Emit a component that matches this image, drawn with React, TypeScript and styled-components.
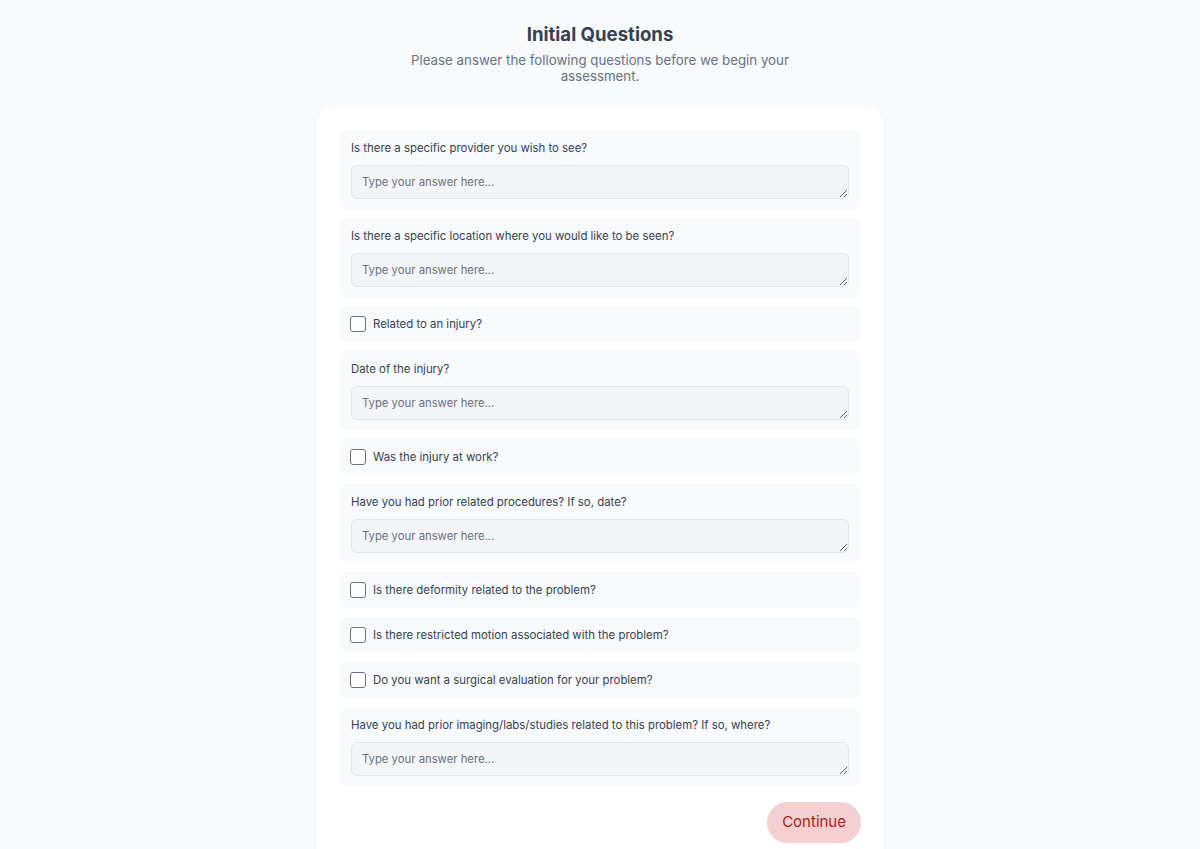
import { createGlobalStyle, styled } from "styled-components";

const GlobalStyle = createGlobalStyle`
  html, body {
    margin: 0;
    padding: 0;
    background-color: #f8fafc;
    font-family: Inter, "Noto Sans", sans-serif;
    color: #374151;
  }
  * {
    box-sizing: border-box;
  }
`;

const Page = styled.div`
  display: flex;
  flex-direction: column;
  align-items: center;
  padding: 20px 16px 40px;
`;

const Title = styled.h1`
  margin: 0;
  font-size: 18.6px;
  line-height: 28px;
  font-weight: 700;
  color: #374151;
`;

const Subtitle = styled.p`
  margin: 4px 0 0;
  max-width: 390px;
  text-align: center;
  font-size: 13.3px;
  line-height: 16px;
  color: #6b7280;
`;

const Card = styled.div`
  margin-top: 23px;
  width: 568px;
  background-color: #ffffff;
  border-radius: 16px;
  padding: 23px;
  box-shadow: 0 1px 3px rgba(15, 23, 42, 0.06), 0 1px 2px rgba(15, 23, 42, 0.04);
  display: flex;
  flex-direction: column;
  gap: 9px;
`;

const Question = styled.div`
  background-color: #f8fafc;
  border-radius: 8px;
  padding: 10px 12px;
  display: flex;
  flex-direction: column;
  gap: 9px;
`;

const Label = styled.label`
  font-size: 11.4px;
  line-height: 16px;
  color: #374151;
`;

const Answer = styled.textarea`
  display: block;
  width: 100%;
  height: 34px;
  min-height: 34px;
  padding: 7px 10px;
  border: 1px solid #e2e8f0;
  border-radius: 6px;
  background-color: #f3f5f8;
  font-family: Inter, "Noto Sans", sans-serif;
  font-size: 11.3px;
  line-height: 18px;
  color: #374151;
  resize: vertical;
  &::placeholder {
    color: #6b7280;
  }
  &:focus {
    outline: none;
    border-color: #cbd5e1;
  }
`;

const CheckRow = styled.label`
  background-color: #f8fafc;
  border-radius: 8px;
  padding: 10px 11px;
  display: flex;
  align-items: center;
  gap: 7px;
  font-size: 11.4px;
  line-height: 16px;
  color: #374151;
  cursor: pointer;
`;

const Box = styled.input`
  appearance: none;
  margin: 0;
  width: 16px;
  height: 16px;
  flex-shrink: 0;
  border: 1.5px solid #6b7280;
  border-radius: 3px;
  background-color: #ffffff;
  cursor: pointer;
  &:checked {
    background-color: #b91c1c;
    border-color: #b91c1c;
  }
`;

const Footer = styled.div`
  display: flex;
  justify-content: flex-end;
  margin-top: 7px;
`;

const ContinueButton = styled.button`
  border: 0;
  border-radius: 999px;
  background-color: #f5d0d0;
  color: #a91d1d;
  font-family: Inter, "Noto Sans", sans-serif;
  font-size: 15px;
  line-height: 20px;
  padding: 10px 15px 11px;
  cursor: pointer;
`;

type Item = { kind: "text" | "check"; text: string };

const questions: Item[] = [
  { kind: "text", text: "Is there a specific provider you wish to see?" },
  { kind: "text", text: "Is there a specific location where you would like to be seen?" },
  { kind: "check", text: "Related to an injury?" },
  { kind: "text", text: "Date of the injury?" },
  { kind: "check", text: "Was the injury at work?" },
  { kind: "text", text: "Have you had prior related procedures? If so, date?" },
  { kind: "check", text: "Is there deformity related to the problem?" },
  { kind: "check", text: "Is there restricted motion associated with the problem?" },
  { kind: "check", text: "Do you want a surgical evaluation for your problem?" },
  {
    kind: "text",
    text: "Have you had prior imaging/labs/studies related to this problem? If so, where?",
  },
];

export default function App() {
  return (
    <>
      <GlobalStyle />
      <Page>
        <Title>Initial Questions</Title>
        <Subtitle>
          Please answer the following questions before we begin your assessment.
        </Subtitle>
        <Card>
          {questions.map((q, i) =>
            q.kind === "text" ? (
              <Question key={i}>
                <Label htmlFor={`q${i}`}>{q.text}</Label>
                <Answer id={`q${i}`} rows={1} placeholder="Type your answer here..." />
              </Question>
            ) : (
              <CheckRow key={i}>
                <Box type="checkbox" />
                {q.text}
              </CheckRow>
            )
          )}
          <Footer>
            <ContinueButton>Continue</ContinueButton>
          </Footer>
        </Card>
      </Page>
    </>
  );
}
